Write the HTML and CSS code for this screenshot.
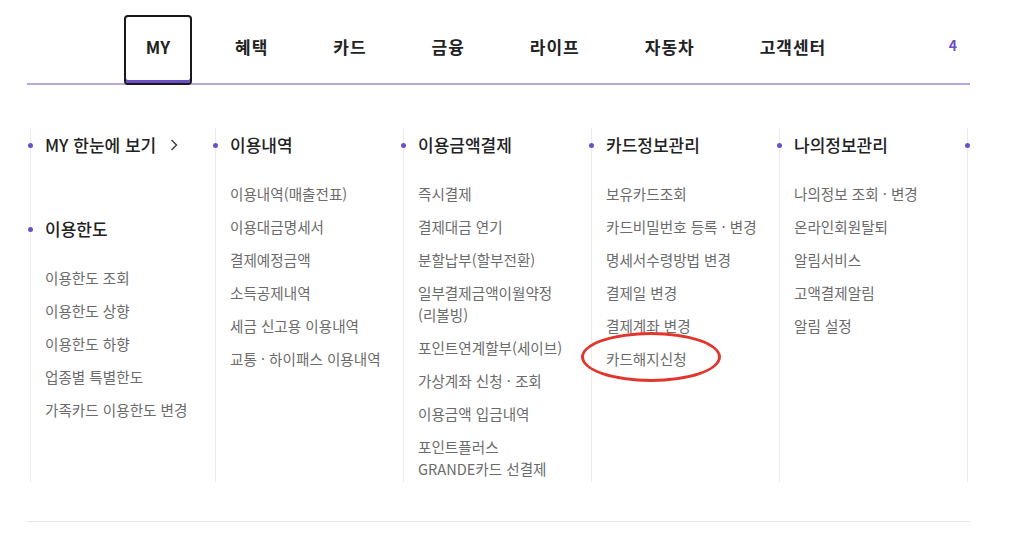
FILE: index.html
```html
<!DOCTYPE html>
<html lang="ko">
<head>
<meta charset="utf-8">
<title>MY 메뉴</title>
<link rel="stylesheet" href="styles.css">
</head>
<body>
<div class="page">
  <header class="gnb">
    <ul class="gnb-list">
      <li class="gnb-item is-active">MY</li>
      <li class="gnb-item">혜택</li>
      <li class="gnb-item">카드</li>
      <li class="gnb-item">금융</li>
      <li class="gnb-item">라이프</li>
      <li class="gnb-item">자동차</li>
      <li class="gnb-item">고객센터</li>
    </ul>
    <span class="gnb-count">4</span>
  </header>

  <div class="menu">
    <section class="col">
      <h3 class="col-title">MY 한눈에 보기<svg class="chev" width="8" height="12" viewBox="0 0 8 12"><polyline points="1.5,1 6.5,6 1.5,11" fill="none" stroke="#444" stroke-width="1.5"/></svg></h3>
      <h3 class="col-title col-title--second">이용한도</h3>
      <ul class="links">
        <li>이용한도 조회</li>
        <li>이용한도 상향</li>
        <li>이용한도 하향</li>
        <li>업종별 특별한도</li>
        <li>가족카드 이용한도 변경</li>
      </ul>
    </section>
    <section class="col">
      <h3 class="col-title">이용내역</h3>
      <ul class="links">
        <li>이용내역(매출전표)</li>
        <li>이용대금명세서</li>
        <li>결제예정금액</li>
        <li>소득공제내역</li>
        <li>세금 신고용 이용내역</li>
        <li>교통 · 하이패스 이용내역</li>
      </ul>
    </section>
    <section class="col">
      <h3 class="col-title">이용금액결제</h3>
      <ul class="links">
        <li>즉시결제</li>
        <li>결제대금 연기</li>
        <li>분할납부(할부전환)</li>
        <li>일부결제금액이월약정<br>(리볼빙)</li>
        <li>포인트연계할부(세이브)</li>
        <li>가상계좌 신청 · 조회</li>
        <li>이용금액 입금내역</li>
        <li>포인트플러스<br>GRANDE카드 선결제</li>
      </ul>
    </section>
    <section class="col">
      <h3 class="col-title">카드정보관리</h3>
      <ul class="links">
        <li>보유카드조회</li>
        <li>카드비밀번호 등록 · 변경</li>
        <li>명세서수령방법 변경</li>
        <li>결제일 변경</li>
        <li>결제계좌 변경</li>
        <li class="marked">카드해지신청<span class="ring"></span></li>
      </ul>
    </section>
    <section class="col">
      <h3 class="col-title">나의정보관리</h3>
      <ul class="links">
        <li>나의정보 조회 · 변경</li>
        <li>온라인회원탈퇴</li>
        <li>알림서비스</li>
        <li>고액결제알림</li>
        <li>알림 설정</li>
      </ul>
    </section>
    <section class="col">
      <h3 class="col-title">&nbsp;</h3>
    </section>
  </div>

  <div class="bottom-rule"></div>
</div>
</body>
</html>
```

FILE: styles.css
```css
* { box-sizing: border-box; }

body {
  margin: 0;
  background: #fff;
  font-family: "Noto Sans CJK KR", "Noto Sans", sans-serif;
  color: #222;
}

.page {
  width: 945px;
  margin-left: 27px;
  overflow: hidden;
}

/* top nav */
.gnb {
  display: flex;
  width: 943px;
  height: 85px;
  border-bottom: 2px solid #b7a8e4;
}

.gnb-list {
  display: flex;
  list-style: none;
  margin: 0;
  padding: 0 0 0 97px;
}

.gnb-item {
  height: 70px;
  margin-top: 15px;
  padding: 0 32px 7px 33px;
  display: flex;
  align-items: center;
  font-size: 17px;
  font-weight: 700;
  letter-spacing: 1px;
  color: #222;
  white-space: nowrap;
}

.gnb-item.is-active {
  width: 68px;
  padding: 0 0 7px;
  margin-right: 10px;
  justify-content: center;
  letter-spacing: 0;
  border: 2px solid #1a1a1a;
  border-radius: 4px;
  box-shadow: inset 0 -3px 0 #6a4fc9;
  background: #fff;
  position: relative;
  z-index: 1;
}

.gnb-count {
  margin-left: auto;
  padding: 34px 13px 0 0;
  font-size: 14px;
  font-weight: 700;
  color: #6a4fc9;
  line-height: 22px;
}

/* mega menu */
.menu {
  display: grid;
  grid-template-columns: 3px 185px repeat(5, 188px);
  margin-top: 43px;
}

.menu::before { content: ""; }

.col {
  position: relative;
  height: 354px;
  border-left: 1px solid #ececec;
  padding: 6px 0 0 14px;
}

.col-title {
  position: relative;
  margin: 0 0 27px;
  font-size: 17px;
  line-height: 22px;
  font-weight: 500;
  color: #222;
  white-space: nowrap;
  display: flex;
  align-items: center;
}

.col-title::before {
  content: "";
  position: absolute;
  left: -17px;
  top: 8.5px;
  width: 5px;
  height: 5px;
  border-radius: 50%;
  background: #6a4fc9;
}

.col-title--second { margin-top: 62px; }

.chev { margin-left: 14px; }

.links {
  list-style: none;
  margin: 0;
  padding: 0;
  display: flex;
  flex-direction: column;
  gap: 11px;
}

.links li {
  font-size: 14.6px;
  line-height: 22px;
  color: #6b6b6b;
  white-space: nowrap;
}

.links li.marked { position: relative; }

.ring {
  position: absolute;
  left: -25px;
  top: -16px;
  width: 140px;
  height: 50px;
  border: 3px solid #e2352c;
  border-radius: 50%;
}

.bottom-rule {
  width: 943px;
  margin-top: 39px;
  border-top: 1px solid #e6e6e6;
}
```
